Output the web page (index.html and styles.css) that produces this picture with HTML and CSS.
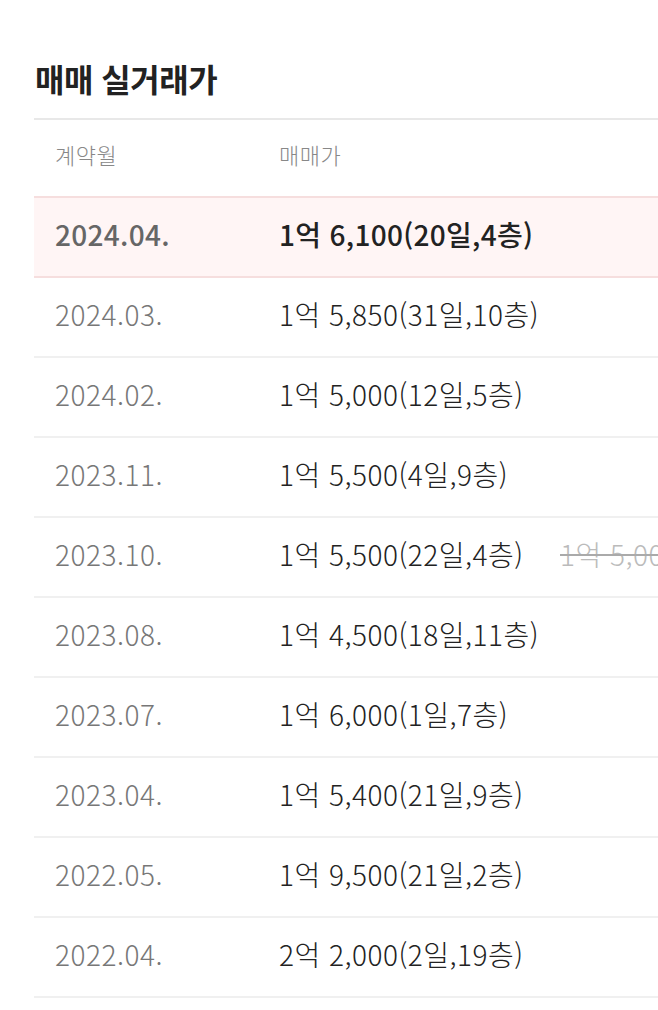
FILE: index.html
```html
<!DOCTYPE html>
<html lang="ko">
<head>
<meta charset="utf-8">
<link rel="stylesheet" href="styles.css">
</head>
<body>
<div class="page">
  <h2 class="title">매매 실거래가</h2>
  <div class="table">
    <div class="row head"><span class="c-date">계약월</span><span class="c-price">매매가</span></div>
    <div class="row hl"><span class="c-date">2024.04.</span><span class="c-price">1억 6,100(20일,4층)</span></div>
    <div class="row"><span class="c-date">2024.03.</span><span class="c-price">1억 5,850(31일,10층)</span></div>
    <div class="row"><span class="c-date">2024.02.</span><span class="c-price">1억 5,000(12일,5층)</span></div>
    <div class="row"><span class="c-date">2023.11.</span><span class="c-price">1억 5,500(4일,9층)</span></div>
    <div class="row"><span class="c-date">2023.10.</span><span class="c-price">1억 5,500(22일,4층)</span><span class="c-old">1억 5,000</span></div>
    <div class="row"><span class="c-date">2023.08.</span><span class="c-price">1억 4,500(18일,11층)</span></div>
    <div class="row"><span class="c-date">2023.07.</span><span class="c-price">1억 6,000(1일,7층)</span></div>
    <div class="row"><span class="c-date">2023.04.</span><span class="c-price">1억 5,400(21일,9층)</span></div>
    <div class="row"><span class="c-date">2022.05.</span><span class="c-price">1억 9,500(21일,2층)</span></div>
    <div class="row"><span class="c-date">2022.04.</span><span class="c-price">2억 2,000(2일,19층)</span></div>
  </div>
</div>
</body>
</html>
```

FILE: styles.css
```css
html, body {
  margin: 0;
  padding: 0;
  background: #fff;
  overflow: hidden;
}
body {
  font-family: "Noto Sans CJK KR", "Noto Sans", sans-serif;
  width: 658px;
}
.page {
  padding: 56px 0 0 34px;
}
.title {
  margin: 0 0 0 1px;
  font-size: 32px;
  font-weight: 700;
  color: #222;
  line-height: 44px;
  height: 62px;
  letter-spacing: -0.5px;
}
.table {
  border-top: 2px solid #e8e8e8;
  width: 624px;
  overflow: hidden;
}
.row {
  display: grid;
  grid-template-columns: 224px 281px auto;
  align-items: center;
  box-sizing: border-box;
  height: 80px;
  padding: 0 0 6px 21px;
  border-bottom: 2px solid #f0f0f0;
  font-size: 28px;
  font-weight: 300;
  letter-spacing: 0.5px;
  color: #222;
  white-space: nowrap;
}
.row.head {
  height: 78px;
  padding-bottom: 8px;
  border-bottom: 2px solid #f6dede;
  font-size: 22px;
  letter-spacing: 0.5px;
}
.row.head span {
  color: #888;
}
.row.hl {
  background: #fff5f5;
  border-bottom: 2px solid #f6dede;
  font-weight: 500;
  letter-spacing: 0.3px;
}
.row.hl .c-date {
  color: #666;
}
.c-date {
  color: #777;
}
.c-price {
  color: #222;
}
.c-old {
  color: #bbb;
  text-decoration: line-through;
  text-decoration-color: #aaa;
}
```
